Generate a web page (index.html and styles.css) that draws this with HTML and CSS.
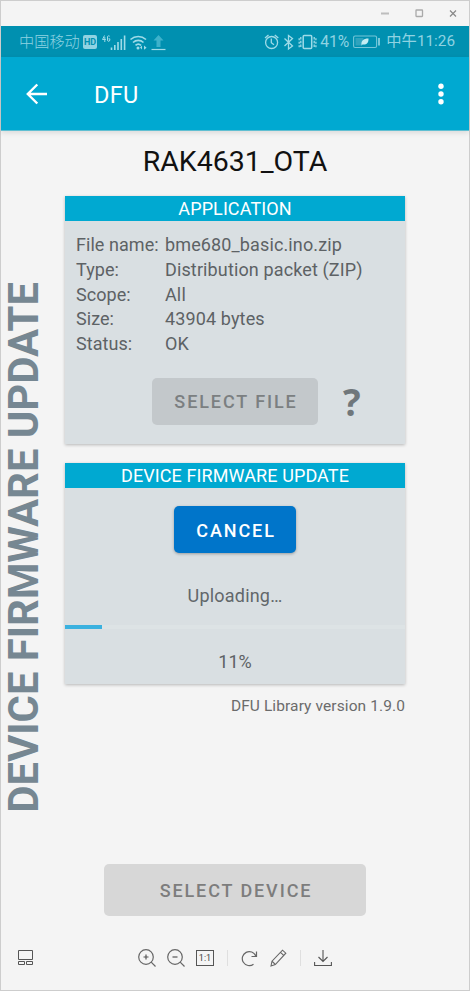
FILE: index.html
```html
<!DOCTYPE html>
<html lang="en">
<head>
<meta charset="utf-8">
<title>DFU</title>
<link rel="stylesheet" href="styles.css">
</head>
<body>
<div class="window">
  <div class="titlebar">
    <svg width="80" height="12" viewBox="0 0 80 12" fill="none">
      <path d="M0 6.500h8" stroke="#bdbdbd" stroke-width="2"/>
      <rect x="35" y="3" width="6.500" height="6.500" rx=".5" stroke="#aaa" stroke-width="1.300"/>
      <path d="M69 3.500l6 6M75 3.500l-6 6" stroke="#888" stroke-width="1.200"/>
    </svg>
  </div>
  <div class="statusbar">
    <span class="carrier">中国移动</span>
    <span class="hd">HD</span>
    <svg class="signals" width="65" height="18" viewBox="101 32 65 18" fill="none" stroke="#9fdbe8">
      <path d="M104.500 34.500l-2 4h3.300M104.800 36v5M109.800 35.500c-.5-1-2.300-1-2.300.5v3c0 1.800 2.300 1.800 2.300 0v-1.200h-1.300" stroke-width="1"/>
      <path d="M111.500 49v-2.500M114.800 49v-5M118 49v-8M121.300 49V38M124.600 49V34.500" stroke-width="1.600"/>
      <path d="M130.500 38.500c4.500-4 11-4 15.500 0M133 41.500c3-2.800 7.500-2.800 10.500 0M135.500 44.400c1.800-1.700 3.800-1.700 5.500 0" stroke-width="1.600"/>
      <circle cx="138" cy="47" r="1.500" fill="#9fdbe8" stroke="none"/>
      <path d="M142 44.500v4l-2-2zM144 44.500l2.600 2.200-2.600 2z" fill="#9fdbe8" stroke="none"/>
      <path d="M158.500 34l5 5.500h-3V46h-4v-6.500h-3z" fill="#3eb2cb" stroke="none"/>
      <path d="M151.500 48.500h14" stroke="#9fdbe8" stroke-width="1.200"/>
    </svg>
    <div class="status-right">
      <svg width="54" height="18" viewBox="265 33 54 18" fill="none" stroke="#9fdbe8" stroke-width="1.300">
        <circle cx="272.600" cy="42.500" r="6"/>
        <path d="M272.300 38.500v4.200l2.700 2M266 38l3.500-3M279.300 38l-3.500-3"/>
        <path d="M285.500 38.500l8 7.500-4 3V35.500l4 3-8 7.500"/>
        <rect x="304.200" y="35.500" width="8.500" height="13" rx="1" stroke-width="1.500"/>
        <path d="M301.800 37v10M315.200 37v10" stroke-width="1.300" stroke-dasharray="2.500 1.200"/>
        <path d="M300.200 38.200v9M316.900 38.200v9" stroke-width="1.300" stroke-dasharray="2 1.500"/>
      </svg>
      <span class="pct">41%</span>
      <svg class="battery" width="28" height="14" viewBox="353 35 28 14" fill="none" stroke="#75c6d8">
        <rect x="353.600" y="36" width="23" height="11.500" rx="1.500" stroke-width="1.100"/>
        <path d="M355.500 38h8l-2 7.500h-6z" fill="#2fa3bd" stroke="none"/>
        <path d="M361.500 45c-.5-4 1.500-6.500 7-6.500.2 4.500-2 6.500-6 6l-1.200 1.300z" fill="#c3ecf2" stroke="none"/>
        <path d="M379 38v7.500" stroke="#9fdbe8" stroke-width="1.500"/>
      </svg>
      <span class="clock">中午11:26</span>
    </div>
  </div>
  <header class="appbar">
    <svg class="back" width="22" height="22" viewBox="0 0 22 22" fill="none" stroke="#fff" stroke-width="2.400"><path d="M21 11H2M11.300 1.500L1.800 11l9.500 9.500"/></svg>
    <span class="app-title">DFU</span>
    <svg class="more" width="6" height="22" viewBox="0 0 6 22" fill="#fff"><circle cx="3" cy="3.200" r="2.700"/><circle cx="3" cy="11" r="2.700"/><circle cx="3" cy="18.800" r="2.700"/></svg>
  </header>
  <main class="screen">
    <h1 class="device">RAK4631_OTA</h1>
    <aside class="side"><span class="side-text">DEVICE FIRMWARE UPDATE</span></aside>
    <div class="cards">
      <section class="card application">
        <h2 class="card-head">APPLICATION</h2>
        <dl class="info">
          <dt>File name:</dt><dd>bme680_basic.ino.zip</dd>
          <dt>Type:</dt><dd>Distribution packet (ZIP)</dd>
          <dt>Scope:</dt><dd>All</dd>
          <dt>Size:</dt><dd>43904 bytes</dd>
          <dt>Status:</dt><dd>OK</dd>
        </dl>
        <div class="file-row">
          <button class="btn select-file">SELECT FILE</button>
          <span class="help">?</span>
        </div>
      </section>
      <section class="card update">
        <h2 class="card-head">DEVICE FIRMWARE UPDATE</h2>
        <button class="btn cancel">CANCEL</button>
        <p class="uploading">Uploading…</p>
        <div class="track"><div class="bar" style="width:11%"></div></div>
        <p class="percent">11%</p>
      </section>
      <p class="version">DFU Library version 1.9.0</p>
    </div>
  </main>
  <button class="btn select-device">SELECT DEVICE</button>
  <footer class="toolbar">
    <svg width="16" height="16" viewBox="0 0 16 16" fill="none" stroke="#555"><path d="M.5.5h14v9H.5zM.5 11.500h6v3h-6zM8.500 11.500h6v3h-6z"/></svg>
    <div class="tools">
      <svg width="19" height="19" viewBox="0 0 19 19" fill="none" stroke="#666" stroke-width="1.200"><circle cx="8" cy="8" r="7.300"/><path d="M13.200 13.200l4.300 4.300"/><path d="M5.500 8h5M8 5.500v5" stroke="#555"/></svg>
      <svg width="19" height="19" viewBox="0 0 19 19" fill="none" stroke="#666" stroke-width="1.200"><circle cx="8" cy="8" r="7.300"/><path d="M13.200 13.200l4.300 4.300"/><path d="M5.500 8h5" stroke="#555"/></svg>
      <span class="ratio">1:1</span>
      <i class="sep"></i>
      <svg class="rotate" width="17" height="17" viewBox="0 0 17 17" fill="none" stroke="#666" stroke-width="1.200"><path d="M12.500 14.200A7 7 0 1 1 14.800 6M15.500 1.500v5h-5"/></svg>
      <svg class="pencil" width="17" height="18" viewBox="0 0 17 18" fill="none" stroke="#666" stroke-width="1.100"><path d="M1 17l1-4.800L12.500 1.200l3.300 3L5.300 15.500zM10.500 3.400l3.200 3M2 12.200l3.300 3.300"/></svg>
      <i class="sep"></i>
      <svg class="download" width="18" height="18" viewBox="0 0 18 18" fill="none" stroke="#555" stroke-width="1.100"><path d="M9 1v11.500M4.500 8L9 12.500 13.500 8M.6 13v3.500h16.800V13"/></svg>
    </div>
  </footer>
</div>
</body>
</html>
```

FILE: styles.css
```css
* { box-sizing: border-box; margin: 0; padding: 0; }
body { font-family: Roboto, "Noto Sans CJK SC", sans-serif; }
.window {
  width: 470px; height: 991px;
  display: flex; flex-direction: column;
  background: #f4f4f4;
  border: 1px solid #cdcdcd;
}
.titlebar { height: 25px; display: flex; justify-content: flex-end; align-items: center; padding: 0 8px 2px 0; }
.statusbar {
  height: 31px; display: flex; align-items: center;
  padding: 0 14px 0 18px; background: #0090b0; color: #8fd3e2;
  font-size: 15px; font-weight: 300; white-space: nowrap;
}
.carrier { font-size: 15.200px; line-height: 20px; width: 64px; }
.hd {
  width: 14px; height: 14px; border-radius: 2px; background: #8fd3e2; color: #0090b0;
  font-size: 9px; font-weight: 700; line-height: 14px; text-align: center;
}
.signals { margin-left: 4px; }
.status-right { display: flex; align-items: center; margin-left: auto; }
.pct { font-size: 15.700px; line-height: 20px; margin: 1px 0 0 2px; font-weight: 400; }
.battery { margin: 0 5px 0 4px; }
.clock { height: 20px; font-size: 15.300px; font-weight: 400; line-height: 18px; }
.appbar {
  height: 74px; display: flex; align-items: center;
  padding: 1px 25px 0; background: #00a9d1; color: #fff;
  border-bottom: 1px solid #60bfd2; box-shadow: 0 2px 5px rgba(0, 0, 0, .1);
}
.app-title { margin-left: 46px; padding-top: 2px; font-size: 23.500px; line-height: 30px; letter-spacing: .3px; }
.more { margin-left: auto; }
.screen { display: grid; grid-template-columns: 64px 340px; grid-template-rows: 65px auto; height: 733px; align-content: start; }
.device { grid-column: 1 / 3; margin-right: -64px; padding-top: 14px; text-align: center; font-size: 28.500px; font-weight: 400; line-height: 34px; color: #111; }
.side { grid-row: 2; height: 628px; display: flex; align-items: flex-end; }
.side-text {
  writing-mode: vertical-rl; transform: rotate(180deg); white-space: nowrap;
  font-size: 41.800px; font-weight: 700; line-height: 46px; color: #768792; margin-bottom: 11px;
}
.cards { grid-row: 2; grid-column: 2; }
.card { background: #d9dfe2; box-shadow: 0 1px 3px rgba(0, 0, 0, .25); display: flex; flex-direction: column; align-items: center; }
.application { height: 248px; }
.update { height: 221px; margin-top: 19px; }
.card-head { width: 100%; height: 25px; background: #00a9d1; color: #fff; text-align: center; font-size: 18px; font-weight: 400; line-height: 26px; letter-spacing: .1px; }
.info {
  display: grid; grid-template-columns: 89px auto; grid-auto-rows: 24.800px; width: 100%;
  padding: 12px 0 0 11px; font-size: 18px; line-height: 24px; letter-spacing: .13px; color: #5d6265;
}
.info dt { letter-spacing: .05px; }
.file-row { display: flex; align-items: center; width: 100%; margin-top: 21px; padding-left: 87px; }
.btn { border: 0; border-radius: 5px; font-family: inherit; font-size: 18px; font-weight: 500; letter-spacing: 1.900px; white-space: nowrap; color: #7b7f81; }
.select-file { width: 166px; height: 47px; padding-left: 2px; background: #c3c8cb; }
.help { margin-left: 25px; font-family: "Open Sans", sans-serif; font-size: 37px; font-weight: 700; line-height: 47px; color: #70777b; }
.cancel { width: 122px; height: 47px; margin-top: 18px; padding: 2px 0 0 2px; background: #0075ca; color: #fff; box-shadow: 0 1px 3px rgba(0, 0, 0, .3); }
.uploading { margin-top: 30px; font-size: 18px; line-height: 26px; letter-spacing: .2px; color: #62676a; }
.track { width: 100%; height: 4px; margin-top: 16px; background: #dde3e5; }
.bar { height: 4px; background: #3bb1df; }
.percent { margin-top: 21px; font-size: 18px; line-height: 24px; color: #5d6265; }
.version { margin-top: 12px; text-align: right; font-size: 15.500px; line-height: 20px; letter-spacing: .1px; color: #6b6b6b; }
.select-device { width: 262px; height: 52px; margin: 0 0 0 103px; padding-left: 2px; background: #d7d7d7; color: #7d7d7d; }
.toolbar { display: flex; align-items: center; height: 40px; margin-top: 22px; padding-left: 17px; }
.tools { display: flex; align-items: center; margin-left: 104px; }
.tools svg + svg { margin-left: 10px; }
.ratio { width: 18px; height: 16px; margin-left: 10px; border: 1px solid #555; font-size: 9px; line-height: 14px; text-align: center; color: #444; }
.sep { width: 1px; height: 16px; margin-left: 13px; background: #dfdfdf; }
.rotate { margin-left: 13px; }
.tools .pencil { margin-left: 12px; }
.download { margin-left: 13px; }
```
